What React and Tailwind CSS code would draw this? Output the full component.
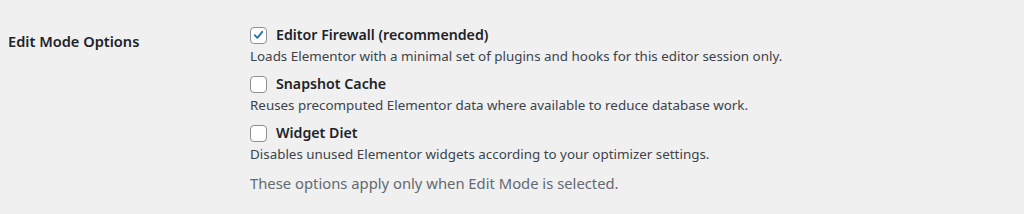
import React from 'react';

const options = [
  {
    label: 'Editor Firewall (recommended)',
    desc: 'Loads Elementor with a minimal set of plugins and hooks for this editor session only.',
    checked: true,
  },
  {
    label: 'Snapshot Cache',
    desc: 'Reuses precomputed Elementor data where available to reduce database work.',
    checked: false,
  },
  {
    label: 'Widget Diet',
    desc: 'Disables unused Elementor widgets according to your optimizer settings.',
    checked: false,
  },
];

const Checkbox = ({ checked }) => (
  <span className="w-[17px] h-[17px] shrink-0 rounded-[4px] border border-[#8c8f94] bg-white flex items-center justify-center">
    {checked && (
      <svg viewBox="0 0 16 16" className="w-4 h-4">
        <path d="M4 8.2 L6.8 11 L12 4.6" fill="none" stroke="#2271b1" strokeWidth="2" strokeLinecap="round" strokeLinejoin="round" />
      </svg>
    )}
  </span>
);

const App = () => {
  return (
    <div className="w-[1024px] h-[214px] bg-[#f0f0f1] text-[#1d2327] font-['Noto_Sans',sans-serif] text-[14px]">
      <div className="flex pt-[25px]">
        <div className="w-[250px] pl-2 pt-[6px] font-semibold text-[14.6px]">Edit Mode Options</div>
        <div className="flex flex-col">
          {options.map((o) => (
            <div key={o.label} className="mb-[7px]">
              <label className="flex items-center gap-[9px] h-[20px] font-semibold text-[14.2px]">
                <Checkbox checked={o.checked} />
                {o.label}
              </label>
              <p className="mt-[1px] text-[13.4px] text-[#3c434a] leading-[21px]">{o.desc}</p>
            </div>
          ))}
          <p className="text-[#646970] text-[14.8px]">These options apply only when Edit Mode is selected.</p>
        </div>
      </div>
    </div>
  );
};

export default App;
